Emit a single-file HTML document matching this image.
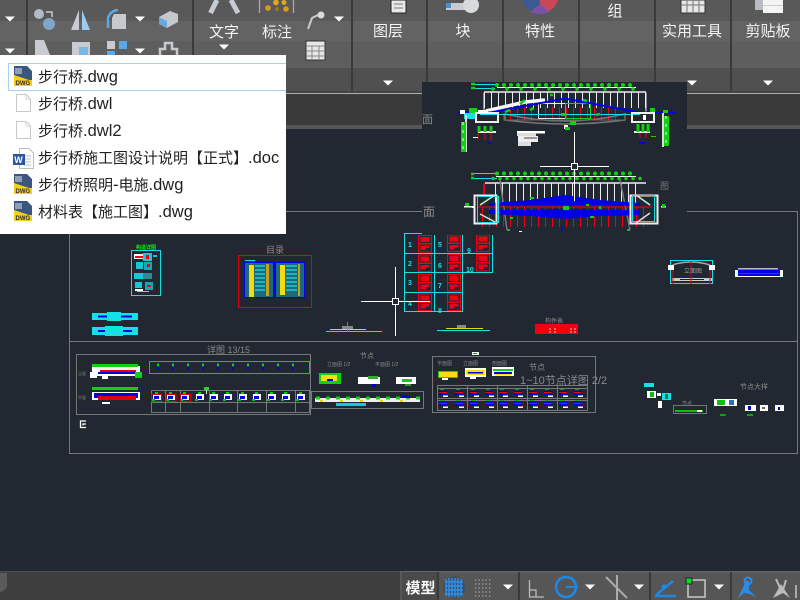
<!DOCTYPE html>
<html lang="zh-CN"><head><meta charset="utf-8"><title>CAD</title>
<style>
html,body{margin:0;padding:0;background:#222831;width:800px;height:600px;overflow:hidden}
svg{display:block}
text{font-family:"Liberation Sans","Noto Sans CJK SC",sans-serif}
</style></head><body>
<svg width="800" height="600" viewBox="0 0 800 600" xmlns="http://www.w3.org/2000/svg">
<defs>
<g id="ar"><path d="M-5 -2.500H5L0 2.500Z" fill="#fff"/></g>
<g id="dwg">
<path d="M0 0H13L18 5V20H0Z" fill="#3c5680"/>
<path d="M1 2H8V8H1Z" fill="#8ea0b8"/>
<path d="M0 9L18 15V20H0Z" fill="#f4d419"/>
<path d="M0 14H18V20H0Z" fill="#f2cf1a"/>
<text x="1.500" y="19" font-size="6" font-weight="bold" fill="#333">DWG</text>
</g>
<g id="doc"><path d="M.5.5H10L14.500 5V17.500H.5Z" fill="#fff" stroke="#c6c8cc"/><path d="M10 .5V5H14.500" fill="none" stroke="#d4d6da"/></g>
<g id="cell"><rect x="0" y="0" width="13" height="8" fill="none" stroke="#f00015"/><rect x="2" y="1.500" width="9" height="5" fill="#f00015"/><rect x="0" y="8.500" width="13" height="8" fill="none" stroke="#f00015"/><path d="M2 10H11V12.500H7V14.500H2Z" fill="#f00015"/></g>
<g id="m1"><rect x="-4" y="-3" width="8" height="6" fill="#fff"/><rect x="-3" y="-1" width="5" height="3" fill="#0000e0"/><rect x="-2" y="-5" width="3" height="2" fill="#0c0"/><rect x="-5" y="2" width="3" height="2" fill="#0c0"/></g>
<g id="m2"><rect x="-4" y="-2" width="8" height="4" fill="#0000e0"/><rect x="-4" y="-1" width="8" height="1" fill="#f00015"/><rect x="-3" y="-4" width="4" height="1" fill="#0a0"/><rect x="0" y="2.500" width="5" height="1.500" fill="#fff"/></g>
</defs>

<!-- canvas -->
<rect width="800" height="600" fill="#222831"/>

<!-- ribbon -->
<rect x="0" y="0" width="800" height="93" fill="#5b5b5b"/>
<rect x="0" y="0" width="800" height="21" fill="#595959"/>
<rect x="0" y="21" width="800" height="20" fill="#636363"/>
<rect x="0" y="41" width="800" height="27" fill="#5e5e5e"/>
<rect x="0" y="68" width="800" height="23" fill="#505050"/>
<g fill="#3a3a3a">
<rect x="26" y="0" width="2" height="92"/><rect x="192" y="0" width="2" height="92"/><rect x="351" y="0" width="2" height="92"/><rect x="426" y="0" width="2" height="92"/><rect x="502" y="0" width="2" height="92"/><rect x="578" y="0" width="2" height="92"/><rect x="654" y="0" width="2" height="92"/><rect x="730" y="0" width="2" height="92"/>
</g>
<rect x="0" y="91" width="800" height="2" fill="#444"/>
<rect x="0" y="93" width="800" height="1" fill="#b0b0b0"/>
<rect x="0" y="94" width="800" height="31" fill="#3a3a3a"/>
<rect x="0" y="125" width="800" height="4" fill="#565656"/>

<!-- ribbon icons -->
<circle cx="39" cy="14" r="5" fill="#b4bac2"/><circle cx="49" cy="24" r="6" fill="#7fa6c8"/><path d="M46 12h6v5" fill="none" stroke="#ccc" stroke-width="1.500"/>
<path d="M79 10V30H71Z" fill="#c8ccd0"/><path d="M82 10V30H90Z" fill="#9ccbee"/>
<path d="M108 28V18Q110 11 118 10" fill="none" stroke="#5aa9e6" stroke-width="2.500"/><path d="M114 14H126V29H112V18Z" fill="#c6cacc"/>
<path d="M159 17L170 11L178 14V22L167 28L159 24Z" fill="#c4c8cc"/><path d="M159 17L167 21V28L159 24Z" fill="#6aa8dc"/>
<use href="#ar" x="10" y="19"/><use href="#ar" x="10" y="51"/><use href="#ar" x="140" y="19"/><use href="#ar" x="140" y="51"/><use href="#ar" x="224" y="47"/><use href="#ar" x="339" y="19"/><use href="#ar" x="388" y="83"/><use href="#ar" x="692" y="83"/><use href="#ar" x="768" y="83"/>
<path d="M35 40H44L50 55H35Z" fill="#c8ccd0"/><rect x="72" y="42" width="18" height="13" fill="#c8ccd0"/><rect x="79" y="47" width="9" height="8" fill="#7ab8e4"/>
<rect x="107" y="41" width="8" height="8" fill="#c8ccd0"/><rect x="119" y="41" width="8" height="8" fill="#5aa9e6"/><rect x="107" y="51" width="8" height="4" fill="#5aa9e6"/>
<path d="M160 55V49H165V43H172V49H177V55" fill="none" stroke="#c8ccd0" stroke-width="2.500"/>
<path d="M210.500 13L217 0M238 13L231 0" stroke="#c6ccd2" stroke-width="5" fill="none"/>
<path d="M259.500 0V13M293.500 0V13" stroke="#a8a8a8" stroke-width="1.300"/>
<circle cx="268" cy="8" r="2.800" fill="#d89a20"/><circle cx="276" cy="2.500" r="2.800" fill="#e0a820"/><circle cx="284" cy="2.500" r="2.500" fill="#e0a820"/><circle cx="286" cy="9" r="2.800" fill="#d89a20"/><circle cx="277" cy="9" r="2" fill="#a87010"/>
<path d="M308 29L312 18L318 15" fill="none" stroke="#ccc" stroke-width="2"/><circle cx="321" cy="15" r="3.500" fill="#d8dce0"/>
<rect x="306" y="41" width="19" height="19" fill="#e6e6e6" stroke="#333"/><path d="M306 46H325M306 51H325M306 56H325M312 46V60M319 46V60" stroke="#888" stroke-width="1"/>
<rect x="391" y="0" width="15" height="13" fill="#e8e8e8" stroke="#222"/><path d="M394 4H403M394 8H403" stroke="#777"/>
<rect x="446" y="3" width="30" height="7" fill="#c8ccd0"/><circle cx="471" cy="5" r="8" fill="#d8dadc"/><rect x="446" y="3" width="5" height="5" fill="#4a90d0"/>
<path d="M522 0A18 18 0 0 0 540 13L540 0Z" fill="#3a5a90"/><path d="M540 0V13A18 18 0 0 0 558 0Z" fill="#c84858"/><path d="M530 12L540 4L550 12Q540 16 530 12Z" fill="#7a52a8"/>
<rect x="681" y="0" width="24" height="13" fill="#e6e6e6" stroke="#333"/><path d="M681 5H705M687 0V13M693 0V13M699 0V13" stroke="#777"/>
<rect x="755" y="0" width="11" height="10" fill="#b8bcc0"/><rect x="763" y="0" width="20" height="13" fill="#f4f4f4"/><rect x="763" y="5" width="20" height="1" fill="#ccc"/>

<!-- ribbon labels -->
<g fill="#f2f4f6" font-size="15">
<text x="224" y="37" text-anchor="middle">文字</text>
<text x="277" y="37" text-anchor="middle">标注</text>
<text x="388" y="36" text-anchor="middle">图层</text>
<text x="463" y="36" text-anchor="middle">块</text>
<text x="540" y="36" text-anchor="middle">特性</text>
<text x="615" y="16" text-anchor="middle">组</text>
<text x="692" y="36" text-anchor="middle">实用工具</text>
<text x="768" y="36" text-anchor="middle">剪贴板</text>
</g>

<!-- frame lines -->
<g stroke="#777" stroke-width="1" fill="none" shape-rendering="crispEdges">
<path d="M0 211.500H797.500V453.500H69.500V211.500"/>
<path d="M69 341.500H797"/>
<rect x="76.500" y="354.500" width="234" height="60"/>
<rect x="151.500" y="390.500" width="158" height="22"/>
<path d="M151 402.500H309M165.500 390V412M180.500 390V412M209.500 390V412M237.500 390V412M266.500 390V412M295.500 390V412"/>
<rect x="311.500" y="391.500" width="112" height="17"/>
<rect x="432.500" y="356.500" width="163" height="56"/>
<rect x="437.500" y="385.500" width="150" height="25"/>
<path d="M437 388.500H587M437 398.500H587M437 400.500H587M467.500 385V410M497.500 385V410M527.500 385V410M557.500 385V410"/>
<rect x="673.500" y="405.500" width="33" height="8"/>
</g>
<rect x="149.500" y="361.500" width="160" height="12" fill="none" stroke="#1ec81e"/>

<!-- titles -->
<g fill="#8a8a8a" font-size="8">
<text x="207" y="353" font-size="9">详图 13/15</text>
<text x="266" y="253" font-size="9">目录</text>
<text x="520" y="384" font-size="11">1~10节点详图 2/2</text>
<text x="529" y="370" font-size="8">节点</text>
<text x="360" y="358" font-size="7">节点</text>
<text x="545" y="323" font-size="6">构件表</text>
<text x="740" y="389" font-size="7">节点大样</text>
</g>
<text x="136" y="249" font-size="5" fill="#0f0" font-weight="bold">构造详图</text>

<!-- cyan schedule -->
<g stroke="#14e0e8" fill="none" stroke-width="1" shape-rendering="crispEdges">
<rect x="404.500" y="233.500" width="58" height="78"/>
<rect x="462.500" y="233.500" width="30" height="39"/>
<path d="M434.500 233V312M404 253.500H492M404 272.500H492M404 292.500H463"/>
</g>
<use href="#cell" x="418.500" y="235.500"/><use href="#cell" x="447.500" y="235"/><use href="#cell" x="476.500" y="235"/>
<use href="#cell" x="418.500" y="255"/><use href="#cell" x="447.500" y="254.500"/><use href="#cell" x="476.500" y="254.500"/>
<use href="#cell" x="418.500" y="274.500"/><use href="#cell" x="447.500" y="274.500"/>
<use href="#cell" x="418.500" y="294"/><use href="#cell" x="447.500" y="294"/>
<g fill="#14e0e8" font-size="7" font-weight="bold">
<text x="408" y="247">1</text><text x="408" y="266">2</text><text x="408" y="285">3</text><text x="408" y="306">4</text>
<text x="438" y="247">5</text><text x="438" y="268">6</text><text x="438" y="288">7</text><text x="438" y="313">8</text>
<text x="467" y="253">9</text><text x="466" y="272">10</text>
</g>

<!-- left cyan detail -->
<rect x="131.500" y="250.500" width="29" height="45" fill="none" stroke="#14e0e8"/>
<rect x="134" y="254" width="10" height="5" fill="#fff"/><rect x="135" y="256" width="8" height="2" fill="#f00015"/><rect x="143" y="253" width="9" height="8" fill="#14c8d8"/><rect x="146" y="255" width="3" height="4" fill="#f00015"/><rect x="153" y="255" width="4" height="2" fill="#14c8d8"/>
<rect x="136" y="262" width="7" height="7" fill="#14c8d8"/><rect x="144" y="262" width="8" height="8" fill="#14a8b8"/><rect x="147" y="264" width="3" height="3" fill="#f00015"/>
<rect x="134" y="273" width="9" height="6" fill="#14c8d8"/><rect x="143" y="273" width="9" height="6" fill="#2a8a98"/>
<rect x="135" y="282" width="7" height="6" fill="#14c8d8"/><rect x="145" y="282" width="8" height="8" fill="#14a8b8"/><rect x="147" y="285" width="4" height="2" fill="#f00015"/>
<rect x="135" y="289" width="8" height="2" fill="#fff"/><rect x="137" y="291" width="12" height="1" fill="#bbb"/>

<!-- red table block -->
<rect x="238.500" y="255.500" width="73" height="52" fill="none" stroke="#e00012"/>
<rect x="244" y="262" width="61" height="36" fill="#0000e8"/>
<rect x="245" y="263" width="28" height="34" fill="#1e6a7a"/><rect x="276" y="263" width="28" height="34" fill="#1e6a7a"/>
<rect x="249" y="265" width="5" height="32" fill="#f2dc10"/><rect x="280" y="265" width="5" height="30" fill="#f2dc10"/>
<rect x="266" y="264" width="3" height="32" fill="#c8a020"/><rect x="298" y="264" width="2" height="32" fill="#c8a020"/>
<path d="M255 266H265M255 270H265M255 274H265M255 278H265M255 282H265M255 286H265M255 290H265M286 266H297M286 270H297M286 274H297M286 278H297M286 282H297M286 286H297M286 290H297" stroke="#18d0d8" stroke-width="1.500"/>
<rect x="245" y="260" width="10" height="1" fill="#14e0e8"/>

<!-- cyan beams -->
<rect x="92" y="313" width="46" height="7" fill="#14e0e8"/><rect x="98" y="315.500" width="34" height="2" fill="#0000e8"/><rect x="107" y="312" width="14" height="9" fill="#14e0e8"/>
<rect x="92" y="327" width="46" height="8" fill="#14e0e8"/><rect x="98" y="330" width="34" height="2" fill="#0000e8"/><rect x="105" y="326" width="18" height="10" fill="#14e0e8"/>

<!-- section lines -->
<rect x="326" y="331" width="56" height="1" fill="#14e0e8"/><rect x="330" y="329" width="36" height="1" fill="#e8d810"/><rect x="347" y="322" width="1" height="10" fill="#14a8b8"/><rect x="342" y="326" width="11" height="3" fill="#888"/>
<rect x="437" y="330" width="53" height="1" fill="#14e0e8"/><rect x="446" y="328" width="37" height="1" fill="#e8d810"/><rect x="457" y="325" width="9" height="3" fill="#888"/>

<!-- red schedule -->
<rect x="535" y="324" width="43" height="10" fill="#f00010"/>
<path d="M550 328V333M555 328V333M571 328V333M575 328V333" stroke="#ddd" stroke-width="1" stroke-dasharray="2 1"/>

<!-- right items -->
<rect x="670.500" y="260.500" width="42" height="23" fill="none" stroke="#14e0e8"/>
<path d="M672 265Q691 259 710 265" fill="none" stroke="#aaa" stroke-width="1.500"/>
<rect x="672" y="278" width="40" height="3" fill="#ccc"/><rect x="680" y="279" width="24" height="1" fill="#0000e0"/>
<path d="M673 264V284M691 261V284M710 264V284" stroke="#e00012"/>
<rect x="668" y="265" width="6" height="5" fill="#fff"/><rect x="709" y="265" width="6" height="5" fill="#fff"/>
<text x="684" y="273" font-size="6" fill="#999">立面图</text>
<rect x="735" y="270" width="48" height="7" fill="#fff"/><rect x="738" y="270" width="42" height="6" fill="#0000e8"/><rect x="738" y="273" width="42" height="1" fill="#e00012"/><rect x="738" y="268" width="40" height="1.500" fill="#bbb"/>

<!-- lower-left content -->
<g>
<rect x="92" y="366" width="48" height="10" fill="#fff"/><rect x="92" y="364" width="46" height="3" fill="#10d010"/><rect x="100" y="370" width="36" height="3" fill="#e00012"/><rect x="98" y="372" width="38" height="2" fill="#0000e0"/><rect x="135" y="372" width="7" height="6" fill="#10d010"/><rect x="90" y="372" width="7" height="6" fill="#fff"/><rect x="102" y="376" width="6" height="3" fill="#fff"/>
<rect x="92" y="387" width="46" height="3" fill="#10d010"/><rect x="92" y="392" width="48" height="8" fill="#fff"/><rect x="94" y="393" width="44" height="5" fill="#0000e0"/><rect x="98" y="396" width="38" height="4" fill="#e00012"/><rect x="102" y="402" width="8" height="2" fill="#fff"/>
<text x="78" y="375" font-size="4" fill="#888">立面</text><text x="78" y="399" font-size="4" fill="#888">平面</text>
</g>
<path d="M157 365H307" stroke="#18c818" stroke-width="3" stroke-dasharray="2 13" fill="none"/>
<path d="M157 368H307" stroke="#0000e0" stroke-width="3" stroke-dasharray="2 13" fill="none"/>
<use href="#m1" x="157" y="397"/><use href="#m1" x="171" y="397"/><use href="#m1" x="185" y="397"/><use href="#m1" x="200" y="397"/><use href="#m1" x="214" y="397"/><use href="#m1" x="228" y="397"/><use href="#m1" x="243" y="397"/><use href="#m1" x="257" y="397"/><use href="#m1" x="272" y="397"/><use href="#m1" x="286" y="397"/><use href="#m1" x="301" y="397"/>
<g fill="none" stroke="#e00012"><rect x="151.500" y="394.500" width="10" height="7"/><rect x="166" y="394.500" width="10" height="7"/><rect x="180.500" y="394.500" width="10" height="7"/></g>
<rect x="206" y="388" width="1" height="6" fill="#ddd"/><rect x="204" y="387" width="5" height="3" fill="#3c3"/>
<path d="M86 421H80.500V427.500H86M86 424H83V425.500" fill="none" stroke="#fff" stroke-width="1.300"/>

<!-- mid -->
<rect x="319" y="373" width="22" height="11" fill="#10d010"/><rect x="321" y="375" width="16" height="6" fill="#f2e010"/><rect x="327" y="379" width="6" height="2" fill="#0000e0"/>
<rect x="358" y="377" width="22" height="7" fill="#fff"/><rect x="368" y="376" width="10" height="3" fill="#2fb02f"/><rect x="372" y="384" width="4" height="3" fill="#0000c0"/>
<rect x="396" y="377" width="20" height="7" fill="#fff"/><rect x="402" y="379" width="10" height="3" fill="#10d010"/><rect x="405" y="384" width="6" height="2" fill="#2f902f"/>
<rect x="315" y="398" width="105" height="4" fill="#eee"/><path d="M316 398H420" stroke="#10d010" stroke-width="3" stroke-dasharray="4 6"/><path d="M320 401H420" stroke="#e8d810" stroke-width="2" stroke-dasharray="3 17"/><rect x="402" y="395" width="8" height="3" fill="#0000e0"/>
<rect x="336" y="403" width="30" height="3" fill="#14c8d8"/>
<text x="327" y="366" font-size="5" fill="#888">立面图 1/2</text><text x="375" y="366" font-size="5" fill="#888">平面图 1/2</text>
<rect x="472" y="352" width="7" height="3" fill="#fff"/><rect x="473" y="353" width="4" height="1" fill="#0a0"/>

<!-- middle-right mini -->
<rect x="438" y="371" width="20" height="7" fill="#10d010"/><rect x="439" y="372" width="18" height="5" fill="#f2e010"/><rect x="442" y="378" width="6" height="2" fill="#fff"/>
<rect x="465" y="368" width="21" height="9" fill="#fff"/><rect x="466" y="370" width="19" height="5" fill="#f2e010"/><rect x="468" y="372" width="15" height="1.500" fill="#0000e0"/><rect x="470" y="377" width="6" height="2" fill="#fff"/>
<rect x="492" y="367" width="22" height="9" fill="#fff"/><rect x="493" y="369" width="20" height="2" fill="#10d010"/><rect x="494" y="372" width="18" height="2" fill="#0000e0"/><rect x="495" y="374" width="16" height="1.500" fill="#f2e010"/>
<text x="437" y="365" font-size="5" fill="#888">平面图</text><text x="463" y="365" font-size="5" fill="#888">立面图</text><text x="492" y="365" font-size="5" fill="#888">剖面图</text>
<use href="#m2" x="443" y="393"/><use href="#m2" x="459" y="393"/><use href="#m2" x="474" y="393"/><use href="#m2" x="489" y="393"/><use href="#m2" x="503" y="393"/><use href="#m2" x="518" y="393"/><use href="#m2" x="533" y="393"/><use href="#m2" x="548" y="393"/><use href="#m2" x="563" y="393"/><use href="#m2" x="578" y="393"/>
<use href="#m2" x="443" y="404"/><use href="#m2" x="459" y="404"/><use href="#m2" x="474" y="404"/><use href="#m2" x="489" y="404"/><use href="#m2" x="503" y="404"/><use href="#m2" x="518" y="404"/><use href="#m2" x="533" y="404"/><use href="#m2" x="548" y="404"/><use href="#m2" x="563" y="404"/><use href="#m2" x="578" y="404"/>

<!-- right lower -->
<rect x="644" y="383" width="10" height="4" fill="#14e0e8"/>
<rect x="647" y="391" width="9" height="7" fill="#fff"/><rect x="650" y="392" width="4" height="5" fill="#10c010"/><rect x="662" y="393" width="9" height="7" fill="#14e0e8"/><rect x="665" y="394" width="3" height="5" fill="#0a7a40"/><rect x="657" y="393" width="4" height="3" fill="#fff"/><rect x="658" y="401" width="4" height="7" fill="#fff"/>
<rect x="675" y="410" width="28" height="2" fill="#10c010"/><rect x="697" y="410" width="5" height="2" fill="#fff"/><text x="682" y="405" font-size="5" fill="#888">节点</text>
<rect x="714" y="399" width="23" height="7" fill="#fff"/><rect x="717" y="400" width="8" height="5" fill="#10c010"/><rect x="729" y="400" width="5" height="5" fill="#2a70c0"/><rect x="720" y="414" width="6" height="2" fill="#0a0"/>
<rect x="745" y="405" width="11" height="6" fill="#fff"/><rect x="748" y="406" width="3" height="4" fill="#0000c0"/><rect x="747" y="414" width="6" height="2" fill="#0a0"/>
<rect x="760" y="405" width="8" height="6" fill="#fff"/><rect x="762" y="407" width="3" height="2" fill="#666"/>
<rect x="775" y="405" width="9" height="6" fill="#fff"/><rect x="778" y="407" width="2" height="3" fill="#0000c0"/>

<!-- crosshair 2 -->
<path d="M361 301.500H392M399 301.500H430M395.500 267V298M395.500 305V336" stroke="#fff" stroke-width="1"/>
<rect x="392.500" y="298.500" width="6" height="6" fill="none" stroke="#fff"/>

<!-- overlay preview -->
<rect x="422" y="82" width="265" height="153" fill="#222831"/>
<text x="422" y="123" font-size="11" fill="#8a8a8a">面</text>
<text x="423" y="216" font-size="12" fill="#8a8a8a">面</text>
<text x="660" y="189" font-size="9" fill="#777">图</text>

<!-- top bridge -->
<rect x="471" y="84" width="26" height="1" fill="#14e0e8"/><rect x="471" y="88" width="24" height="1" fill="#14e0e8"/>
<path d="M471 84h4M471 88h4" stroke="#10d010" stroke-width="2.500"/>
<path d="M497 85H634" stroke="#10d010" stroke-width="4" stroke-linecap="round" stroke-dasharray="0 7"/>
<path d="M497 87.500H636" stroke="#fff" stroke-width="1"/>
<path d="M493 89H645" stroke="#10d010" stroke-width="3.500" stroke-linecap="round" stroke-dasharray="0 14"/>
<path d="M484 92H646" stroke="#ededed" stroke-width="1.500"/>
<path d="M484 100H646" stroke="#ededed" stroke-width="16" stroke-dasharray="1 6"/>
<path d="M484 92.500V114M646 92.500V114" stroke="#eee"/>
<path d="M486 111L525 102L545 100" stroke="#fff" stroke-width="3.500" fill="none"/>
<path d="M490 109L530 101" stroke="#ffb" stroke-width="1" stroke-dasharray="2 2"/>
<path d="M510 114H622" stroke="#f00015" stroke-width="14" stroke-dasharray="1 6"/>
<path d="M505 114Q566 128 625 114V120Q566 128 505 120Z" fill="none" stroke="#777" stroke-width="1.500"/>
<path d="M504 113V120H625V113" fill="none" stroke="#666" stroke-width="1"/>
<rect x="538.500" y="103.500" width="52" height="15" fill="none" stroke="#e8e8e8"/>
<rect x="565.500" y="103.500" width="25" height="15" fill="none" stroke="#20d020"/>
<path d="M480 114.500H640" stroke="#14e0e8" stroke-width="1"/>
<path d="M458 112.500H490L565 98.500L640 112.500H675" stroke="#0000f0" stroke-width="2" fill="none"/>
<path d="M520 104L525 100M530 110L534 108M505 112L510 110M583 100l4 1M550 95l3 0M596 115l4-1" stroke="#10d010" stroke-width="2.500"/>
<rect x="561" y="113" width="5" height="3" fill="#10d010"/>
<rect x="570" y="121" width="6" height="4" fill="#10d010"/>
<rect x="564" y="125" width="4" height="4" fill="#fff"/><rect x="565" y="127" width="5" height="3" fill="#10d010"/>
<!-- left pier -->
<rect x="469" y="108" width="8" height="6" fill="#10d010"/><rect x="464" y="113" width="12" height="6" fill="#14e0e8"/><rect x="460" y="110" width="5" height="4" fill="#fff"/>
<rect x="465" y="115" width="2" height="37" fill="#ddd"/>
<rect x="461" y="122" width="5" height="30" fill="#10d010"/><path d="M463 122V150" stroke="#fff" stroke-width="1" stroke-dasharray="3 5"/>
<rect x="476" y="113" width="22" height="9" fill="none" stroke="#eee" stroke-width="2"/><rect x="478" y="110" width="10" height="3" fill="#fff"/>
<rect x="478" y="131" width="18" height="2" fill="#eee"/><path d="M478 133V140M485 133V140M491 133V140" stroke="#f00015"/><path d="M479 126V132M485 126V132M491 126V132" stroke="#10d010" stroke-width="3"/><rect x="473" y="137" width="5" height="1" fill="#fff"/><rect x="487" y="142" width="4" height="1.500" fill="#0000e0"/>
<!-- right pier -->
<rect x="650" y="108" width="5" height="4" fill="#10d010"/><rect x="663" y="110" width="5" height="3" fill="#10d010"/><rect x="632" y="113" width="22" height="9" fill="none" stroke="#eee" stroke-width="2"/><rect x="643" y="115" width="3" height="5" fill="#fff"/>
<rect x="662" y="113" width="2" height="34" fill="#ddd"/><rect x="664" y="116" width="5" height="30" fill="#10d010"/><path d="M666 116V146" stroke="#fff" stroke-width="1" stroke-dasharray="3 5"/>
<rect x="634" y="131" width="16" height="2" fill="#eee"/><path d="M638 124V132M643 124V132M648 124V132" stroke="#10d010" stroke-width="3"/><path d="M640 133V138M646 133V138" stroke="#f00015"/><rect x="651" y="136" width="5" height="1" fill="#10d010"/><rect x="639" y="142" width="6" height="1.500" fill="#0000e0"/>
<!-- small notes -->
<rect x="517" y="131" width="28" height="2.500" fill="#fff"/><rect x="517" y="133" width="19" height="3" fill="#ddd"/><rect x="518" y="136" width="20" height="6" fill="#eee"/><rect x="518" y="142" width="13" height="4" fill="#ddd"/><path d="M524 138H537" stroke="#444"/>

<!-- bottom bridge -->
<rect x="471" y="173" width="26" height="1" fill="#14e0e8"/><rect x="471" y="178" width="26" height="1" fill="#14e0e8"/>
<path d="M471 174h3M471 178h3" stroke="#10d010" stroke-width="2.500"/>
<path d="M497 173.500H634" stroke="#10d010" stroke-width="4" stroke-linecap="round" stroke-dasharray="0 7"/>
<path d="M496 176.500H636" stroke="#fff" stroke-width="1"/>
<path d="M493 178.500H645" stroke="#10d010" stroke-width="3.500" stroke-linecap="round" stroke-dasharray="0 7"/>
<path d="M485 183H646" stroke="#ededed" stroke-width="1.500"/>
<path d="M495 194H640" stroke="#ededed" stroke-width="22" stroke-dasharray="1 6"/>
<path d="M484 183V196" stroke="#e00012" stroke-width="2"/>
<path d="M500 180L507 230M620 180L630 230" stroke="#777" stroke-width="1.500" fill="none"/>
<path d="M482 217H650" stroke="#f00015" stroke-width="20" stroke-dasharray="1 6"/>
<path d="M478 207H652" stroke="#f00015" stroke-width="1"/>
<path d="M489 203L530 200L565 195L600 200L640 203L640 206L600 205H530L489 206Z" fill="#0000e6"/>
<path d="M489 210H530L565 209L600 210H640V215L600 216L565 219L530 216L489 214Z" fill="#0000e6"/>
<rect x="474.500" y="195.500" width="22" height="28" fill="none" stroke="#eee" stroke-width="2"/>
<rect x="477.500" y="196.500" width="21" height="26" fill="none" stroke="#14e0e8"/>
<rect x="472" y="206" width="3" height="2" fill="#fff"/><rect x="464" y="206" width="8" height="1.500" fill="#fff"/><rect x="465" y="203" width="4" height="3" fill="#10d010"/>
<path d="M480 205L495 195M480 214L495 222" stroke="#ddd" stroke-width="1.500"/>
<rect x="630.500" y="195.500" width="27" height="28" fill="none" stroke="#eee" stroke-width="2"/>
<rect x="632.500" y="195.500" width="22" height="26" fill="none" stroke="#14e0e8"/>
<path d="M636 195L650 205M636 223L650 213" stroke="#ddd" stroke-width="1.500"/>
<rect x="661" y="206" width="5" height="1.500" fill="#fff"/><rect x="662" y="204" width="3" height="3" fill="#10d010"/>
<rect x="563" y="206" width="6" height="4" fill="#10d010"/><path d="M562 226V231" stroke="#0000e0" stroke-width="1.500"/>
<path d="M530 198l4 0M586 205l3 0M600 206v3M590 217l4 0M510 218l3 0" stroke="#10d010" stroke-width="2"/>
<rect x="507" y="229" width="3" height="2" fill="#3a3"/><rect x="627" y="229" width="3" height="2" fill="#3a3"/><rect x="519" y="231" width="3" height="1" fill="#fff"/>

<!-- crosshair 1 -->
<path d="M540 166.500H571M578 166.500H609M574.500 132V163M574.500 170V201" stroke="#fff" stroke-width="1"/>
<rect x="571.500" y="163.500" width="6" height="6" fill="none" stroke="#fff"/>

<!-- menu -->
<rect x="0" y="55" width="286" height="179" fill="#fff"/>
<path d="M286 63.500H8.500V90.500H286" fill="#fff" stroke="#a6d2f2"/>
<use href="#dwg" x="14" y="66"/>
<use href="#doc" x="16" y="94"/>
<use href="#doc" x="16" y="121"/>
<g transform="translate(13,148)"><path d="M6.500.5H16L20.500 5V20.500H6.500Z" fill="#fff" stroke="#bcbec2"/><path d="M11 8H18M11 11H18M11 14H18M11 17H18" stroke="#b4c0d4"/><rect x="0" y="6" width="12" height="11" fill="#2b579a"/><text x="1.200" y="15" font-size="9" font-weight="bold" fill="#fff">W</text></g>
<use href="#dwg" x="14" y="174"/>
<use href="#dwg" x="14" y="201"/>
<g fill="#222" font-size="15">
<text x="38" y="82">步行桥<tspan font-size="16.500">.dwg</tspan></text>
<text x="38" y="109">步行桥<tspan font-size="16.500">.dwl</tspan></text>
<text x="38" y="136">步行桥<tspan font-size="16.500">.dwl2</tspan></text>
<text x="38" y="163">步行桥施工图设计说明【正式】<tspan font-size="16.500">.doc</tspan></text>
<text x="38" y="190">步行桥照明<tspan font-size="16.500">-</tspan>电施<tspan font-size="16.500">.dwg</tspan></text>
<text x="38" y="217">材料表【施工图】<tspan font-size="16.500">.dwg</tspan></text>
</g>

<!-- status bar -->
<rect x="0" y="571" width="800" height="29" fill="#3e3e3e"/>
<rect x="0" y="571" width="800" height="1" fill="#4a505a"/>
<path d="M0 573H7V585Q7 590 0 592Z" fill="#5a5a5a"/>
<rect x="400" y="571" width="400" height="29" fill="#565656"/>
<rect x="400" y="571" width="400" height="1.500" fill="#666"/>
<rect x="402" y="572" width="35" height="28" fill="#4a4a4a"/>
<text x="405.500" y="593" font-size="15" font-weight="bold" fill="#f4f6f8">模型</text>
<g fill="#3a3a3a"><rect x="437" y="572" width="2" height="28"/><rect x="518" y="572" width="2" height="28"/><rect x="649" y="572" width="2" height="28"/><rect x="730" y="572" width="2" height="28"/></g>
<circle cx="454" cy="587" r="11" fill="#2a4a6a" opacity=".55"/>
<path d="M446 579V596M449 578V597M452 578V597M455 578V597M458 578V597M461 579V596M445 582H463M445 586H463M445 590H463M445 594H463" stroke="#2f8fe8" stroke-width="1.500"/>
<path d="M475 580H492M475 584H492M475 588H492M475 592H492M475 596H492" stroke="#aaa" stroke-width="1.300" stroke-dasharray="1.300 2.200"/>
<use href="#ar" x="508" y="587"/>
<path d="M529.500 580V597H544M529.500 590H536V597" fill="none" stroke="#bbb" stroke-width="1.300"/>
<circle cx="566" cy="587" r="10" fill="none" stroke="#1f88e4" stroke-width="2.500"/><path d="M566 587H577L571 577" fill="none" stroke="#1f88e4" stroke-width="1.800"/>
<use href="#ar" x="590" y="587"/>
<path d="M606 577L627 598M617 575V600" stroke="#aaa" stroke-width="2" fill="none"/>
<use href="#ar" x="639" y="587"/>
<path d="M655 596H676M656 595L673 581" stroke="#1f88e4" stroke-width="2.500" fill="none"/><circle cx="664" cy="587" r="2.500" fill="#1f88e4"/>
<rect x="688" y="580" width="17" height="17" fill="none" stroke="#c8c8c8" stroke-width="1.500"/><rect x="686" y="578" width="6" height="6" fill="#00e020" stroke="#222"/>
<use href="#ar" x="719" y="587"/>
<circle cx="748" cy="581" r="3.500" fill="none" stroke="#2a8ce6" stroke-width="2"/><path d="M738 598L746 581H749L749 590L757 598L750 594L744 593Z" fill="#2a8ce6"/>
<path d="M773 598L781 584L790 598L783 593Z" fill="#bbb"/><path d="M776 579L781 590M786 580L783 590" stroke="#bbb" stroke-width="2"/>
<path d="M796 598V585" stroke="#aaa" stroke-width="2"/>
</svg>
</body></html>
